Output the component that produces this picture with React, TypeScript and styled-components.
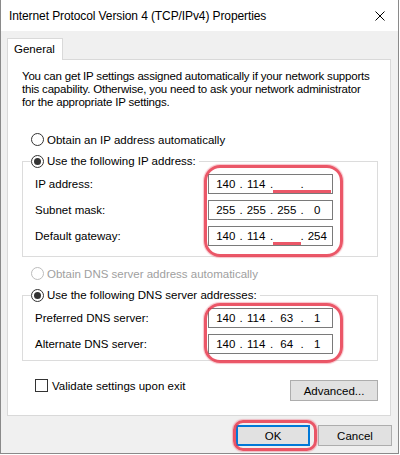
import React from "react";
import styled, { createGlobalStyle } from "styled-components";

const FONT = `"Liberation Sans", Arial, sans-serif`;

const GlobalStyle = createGlobalStyle`
  html, body {
    margin: 0;
    padding: 0;
    background: #ffffff;
  }
  body {
    font-family: ${FONT};
    font-size: 11.5px;
    color: #000;
  }
`;

const Window = styled.div`
  position: relative;
  width: 399px;
  height: 454px;
  box-sizing: border-box;
  border: 1px solid #8a8a8a;
  border-top: none;
  background: #f0f0f0;
  display: flex;
  flex-direction: column;
`;
const TitleBar = styled.div`
  height: 31px;
  flex-shrink: 0;
  background: #fff;
  display: flex;
  align-items: center;
  justify-content: space-between;
  padding: 0 13px 0 8px;
`;
const Title = styled.span`
  font-size: 12px;
  letter-spacing: -0.1px;
`;
const Body = styled.div`
  flex: 1;
  padding: 7px 7px 0 6px;
  display: flex;
  flex-direction: column;
`;
const TabStrip = styled.div`
  display: flex;
`;
const Tab = styled.div`
  position: relative;
  z-index: 1;
  height: 21px;
  line-height: 20px;
  padding: 0 7px 0 6px;
  background: #fff;
  border: 1px solid #d9d9d9;
  border-bottom: none;
  margin-bottom: -1px;
`;
const Panel = styled.div`
  height: 357px;
  box-sizing: border-box;
  background: #fff;
  border: 1px solid #d9d9d9;
  padding: 10px 12px 0 14px;
  display: flex;
  flex-direction: column;
`;
const Intro = styled.p`
  margin: 0;
  line-height: 13px;
  white-space: nowrap;
  letter-spacing: -0.2px;
`;
const OptionRow = styled.div<{ $top: number; $disabled?: boolean }>`
  margin-top: ${(p) => p.$top}px;
  padding-left: 9px;
  height: 13px;
  display: flex;
  align-items: center;
  gap: 3px;
  color: ${(p) => (p.$disabled ? "#a0a0a0" : "#000")};
`;
const Radio = styled.span<{ $checked?: boolean; $disabled?: boolean }>`
  width: 13px;
  height: 13px;
  box-sizing: border-box;
  border-radius: 50%;
  border: 1px solid ${(p) => (p.$disabled ? "#bcbcbc" : "#333")};
  background: #fff;
  display: flex;
  align-items: center;
  justify-content: center;
  flex-shrink: 0;
  &::after {
    content: "";
    display: ${(p) => (p.$checked ? "block" : "none")};
    width: 7px;
    height: 7px;
    border-radius: 50%;
    background: #333;
  }
`;
const Group = styled.fieldset<{ $top: number; $bottom: number }>`
  margin: ${(p) => p.$top}px 0 0 0;
  padding: 6px 44px ${(p) => p.$bottom}px 12px;
  border: 1px solid #dcdcdc;
  min-width: 0;
  display: flex;
  flex-direction: column;
  gap: 6px;
`;
const Legend = styled.legend`
  margin-left: -4px;
  padding: 0 3px 0 0;
  line-height: 13px;
  display: flex;
  align-items: center;
  gap: 3px;
`;
const FieldRow = styled.div`
  display: grid;
  grid-template-columns: 1fr 125px;
  align-items: center;
`;
const IpBox = styled.div`
  height: 20px;
  box-sizing: border-box;
  border: 1px solid #7a7a7a;
  display: flex;
  align-items: center;
  padding-left: 4px;
`;
const Octet = styled.span`
  width: 25.5px;
  text-align: center;
`;
const Dot = styled.span`
  width: 5px;
  text-align: center;
`;
const BottomRow = styled.div`
  margin-top: 18px;
  display: flex;
  justify-content: space-between;
  align-items: flex-start;
`;
const CheckLabel = styled.div`
  padding-left: 13px;
  display: flex;
  align-items: center;
  gap: 4px;
  height: 13px;
`;
const CheckBox = styled.span`
  width: 13px;
  height: 13px;
  box-sizing: border-box;
  border: 1px solid #333;
  background: #fff;
`;
const Button = styled.button<{ $width: number; $default?: boolean }>`
  width: ${(p) => p.$width}px;
  height: 21px;
  box-sizing: border-box;
  background: #e1e1e1;
  border: ${(p) => (p.$default ? "2px solid #0078d7" : "1px solid #adadad")};
  font-family: ${FONT};
  font-size: 11.5px;
  color: #000;
  padding: 0;
`;
const AdvancedButton = styled(Button)`
  margin-top: 1px;
`;
const Footer = styled.div`
  display: flex;
  justify-content: flex-end;
  gap: 8px;
  padding: 9px 0 0 0;
  margin-right: -1px;
`;
const Scribble = styled.div<{ $x: number; $y: number; $w: number; $h: number; $r: number }>`
  position: absolute;
  left: ${(p) => p.$x}px;
  top: ${(p) => p.$y}px;
  width: ${(p) => p.$w}px;
  height: ${(p) => p.$h}px;
  box-sizing: border-box;
  border: 3px solid rgba(232, 58, 78, 0.85);
  border-radius: ${(p) => p.$r}px;
  box-shadow: 0 0 1px 1px rgba(240, 120, 135, 0.45);
  pointer-events: none;
`;
const Underline = styled.div<{ $x: number; $y: number; $w: number }>`
  position: absolute;
  left: ${(p) => p.$x}px;
  top: ${(p) => p.$y}px;
  width: ${(p) => p.$w}px;
  height: 3px;
  background: rgba(232, 58, 78, 0.85);
`;

const CloseIcon = () => (
  <svg width="10" height="10" viewBox="0 0 10 10">
    <path d="M0.5 0.5 L9.5 9.5 M9.5 0.5 L0.5 9.5" stroke="#000" strokeWidth="1" />
  </svg>
);

const Ip = ({ parts }: { parts: string[] }) => (
  <IpBox>
    {parts.map((part, i) => (
      <React.Fragment key={i}>
        <Octet>{part}</Octet>
        {i < 3 && <Dot>.</Dot>}
      </React.Fragment>
    ))}
  </IpBox>
);

const ipFields = [
  { label: "IP address:", parts: ["140", "114", "", ""] },
  { label: "Subnet mask:", parts: ["255", "255", "255", "0"] },
  { label: "Default gateway:", parts: ["140", "114", "", "254"] },
];
const dnsFields = [
  { label: "Preferred DNS server:", parts: ["140", "114", "63", "1"] },
  { label: "Alternate DNS server:", parts: ["140", "114", "64", "1"] },
];

export default function App() {
  return (
    <>
      <GlobalStyle />
      <Window>
        <TitleBar>
          <Title>Internet Protocol Version 4 (TCP/IPv4) Properties</Title>
          <CloseIcon />
        </TitleBar>
        <Body>
          <TabStrip>
            <Tab>General</Tab>
          </TabStrip>
          <Panel>
            <Intro>
              You can get IP settings assigned automatically if your network supports
              <br />
              this capability. Otherwise, you need to ask your network administrator
              <br />
              for the appropriate IP settings.
            </Intro>
            <OptionRow $top={24}>
              <Radio />
              Obtain an IP address automatically
            </OptionRow>
            <Group $top={9} $bottom={10}>
              <Legend>
                <Radio $checked />
                Use the following IP address:
              </Legend>
              {ipFields.map((f) => (
                <FieldRow key={f.label}>
                  <span>{f.label}</span>
                  <Ip parts={f.parts} />
                </FieldRow>
              ))}
            </Group>
            <OptionRow $top={10} $disabled>
              <Radio $disabled />
              Obtain DNS server address automatically
            </OptionRow>
            <Group $top={9} $bottom={6}>
              <Legend>
                <Radio $checked />
                Use the following DNS server addresses:
              </Legend>
              {dnsFields.map((f) => (
                <FieldRow key={f.label}>
                  <span>{f.label}</span>
                  <Ip parts={f.parts} />
                </FieldRow>
              ))}
            </Group>
            <BottomRow>
              <CheckLabel>
                <CheckBox />
                Validate settings upon exit
              </CheckLabel>
              <AdvancedButton $width={88}>Advanced...</AdvancedButton>
            </BottomRow>
          </Panel>
          <Footer>
            <Button $width={74} $default>
              OK
            </Button>
            <Button $width={74}>Cancel</Button>
          </Footer>
        </Body>
        <Scribble $x={203} $y={165} $w={139} $h={92} $r={16} />
        <Scribble $x={203} $y={303} $w={139} $h={60} $r={16} />
        <Scribble $x={232} $y={420} $w={84} $h={31} $r={10} />
        <Underline $x={272} $y={190} $w={58} />
        <Underline $x={272} $y={242} $w={28} />
      </Window>
    </>
  );
}
